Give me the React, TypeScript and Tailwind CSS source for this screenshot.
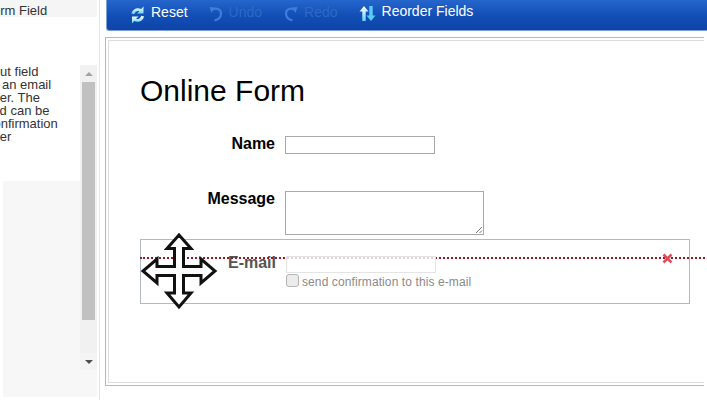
import { useId } from "react";

// Form builder, mid-drag: the e-mail field is being moved, red line marks the drop spot.
const SIDE_LINES = [
  { text: "Input field", cls: "-ml-[18px]" },
  { text: "is an email", cls: "-ml-[11px]" },
  { text: "user. The", cls: "-ml-[14px]" },
  { text: "field can be", cls: "-ml-[17px]" },
  { text: "confirmation", cls: "-ml-[13px]" },
  { text: "user", cls: "-ml-[14px]" },
];

function ResetIcon() {
  const id = useId();
  return (
    <svg width="18" height="18" viewBox="0 0 18 18" className="shrink-0 mt-[5px]">
      <defs>
        <linearGradient id={id} x1="0" y1="0" x2="0" y2="1">
          <stop offset="0" stopColor="#ffffff" />
          <stop offset="1" stopColor="#5fd0f5" />
        </linearGradient>
      </defs>
      <path
        fill={`url(#${id})`}
        d="M14.5 0.5V7.5H8L10.4 5.2C8.6 4.4 6.2 5.4 5.2 8.3L2.4 7.6C3.6 3 7.8 1 12.2 2.9Z"
      />
      <path
        fill={`url(#${id})`}
        d="M3 17.5V10.5H9.5L7.1 12.8C8.9 13.6 11.3 12.6 12.3 9.7L15.1 10.4C13.9 15 9.7 17 5.3 15.1Z"
      />
    </svg>
  );
}

function UndoIcon({ flip }: { flip?: boolean }) {
  return (
    <svg
      width="14"
      height="16"
      viewBox="0 0 14 16"
      className={flip ? "block shrink-0 -scale-x-100" : "block shrink-0"}
    >
      <path
        d="M3.5 3.5C7 1.5 12 3 12 7.5C12 11 9.5 13.5 5.5 14.5"
        fill="none"
        stroke="#3a80da"
        strokeWidth="2.2"
      />
      <path d="M0.5 1L6 1.5L2.5 7Z" fill="#3a80da" />
    </svg>
  );
}

function ReorderIcon() {
  const id = useId();
  return (
    <svg width="17" height="15" viewBox="0 0 17 15" className="block shrink-0 mt-[3px]">
      <defs>
        <linearGradient id={id} x1="0" y1="0" x2="0" y2="1">
          <stop offset="0" stopColor="#ffffff" />
          <stop offset="1" stopColor="#62d2f6" />
        </linearGradient>
      </defs>
      <path d="M5 0L9.5 5.5H6.7V15H3.3V5.5H0.5Z" fill={`url(#${id})`} />
      <path d="M12 15L16.5 9.5H13.7V0H10.3V9.5H7.5Z" fill="#58ccf4" />
    </svg>
  );
}

function MoveCursor() {
  return (
    <svg width="78" height="78" viewBox="0 0 78 78" className="absolute left-[140px] top-[232px] z-20">
      <path
        d="M39 3L51 16.5H43.5V34.5H61V27L75 39L61 51V43.5H43.5V61H51L39 75L27 61H34.5V43.5H17V51L3 39L17 27V34.5H34.5V16.5H27Z"
        fill="#ffffff"
        stroke="#111111"
        strokeWidth="3"
        strokeLinejoin="miter"
      />
    </svg>
  );
}

function Sidebar() {
  return (
    <aside className="w-[100px] shrink-0 h-[400px] flex flex-col border-r border-[#e6e6e6] overflow-hidden bg-white text-[13px] leading-[13px] text-[#333]">
      <div className="h-[17px] mr-[2px] bg-[#f5f5f5] pt-[4px] whitespace-nowrap">
        <span className="block -ml-[15px]">Form Field</span>
      </div>
      <div className="mt-[48px] flex h-[305px] pr-[2px]">
        <div className="flex-1 min-w-0 flex flex-col overflow-hidden">
          <div className="h-[116px] whitespace-nowrap">
            {SIDE_LINES.map((line) => (
              <div key={line.text} className={line.cls}>
                {line.text}
              </div>
            ))}
          </div>
          <div className="flex-1 ml-[3px] bg-[#f7f7f7]" />
        </div>
        <div className="w-[17px] shrink-0 flex flex-col bg-[#f1f1f1]">
          <div className="h-[17px] flex items-center justify-center">
            <div className="w-0 h-0 border-x-[4px] border-x-transparent border-b-[4px] border-b-[#a3a3a3]" />
          </div>
          <div className="h-[238px] mx-[2px] bg-[#c1c1c1]" />
          <div className="flex-1" />
          <div className="h-[17px] flex items-center justify-center bg-[#f4f4f4]">
            <div className="w-0 h-0 border-x-[4px] border-x-transparent border-t-[4px] border-t-[#505050]" />
          </div>
        </div>
      </div>
      <div className="h-[27px] ml-[3px] mr-[2px] bg-[#f7f7f7]" />
    </aside>
  );
}

function Toolbar() {
  return (
    <div className="ml-[6px] h-[31px] rounded-bl-[3px] bg-gradient-to-b from-[#2566cc] via-[#134fb6] to-[#0d44a8] border-b border-l border-[#7f9fd8] flex items-center pb-[6px] pl-[22px] text-[14px] leading-none text-white">
      <ResetIcon />
      <span className="ml-[4px]">Reset</span>
      <span className="ml-[21px] mt-[4px]"><UndoIcon /></span>
      <span className="ml-[6px] text-[#2d6ac6]">Undo</span>
      <span className="ml-[22px] mt-[4px]"><UndoIcon flip /></span>
      <span className="ml-[6px] text-[#2d6ac6]">Redo</span>
      <span className="ml-[21px]"><ReorderIcon /></span>
      <span className="ml-[6px] -mt-[2px]">Reorder Fields</span>
    </div>
  );
}

function FormPanel() {
  return (
    <div className="mt-[6px] ml-[5px] mr-[3px] h-[349px] border border-r-0 border-[#b9b9b9] pt-[2px] pl-[2px] pb-[2px] bg-white">
      <div className="h-full border border-r-0 border-[#dddddd] pl-[31px] pr-[14px]">
        <h1 className="pt-[32px] text-[30px] leading-[36px] font-normal text-black">Online Form</h1>
        <div className="mt-[27px] flex">
          <label className="w-[135px] -mt-[1px] text-right text-[16px] leading-[18px] font-bold text-black">Name</label>
          <input className="ml-[10px] w-[150px] h-[18px] border border-[#a9a9a9] bg-white" />
        </div>
        <div className="mt-[37px] flex">
          <label className="w-[135px] -mt-[1px] text-right text-[16px] leading-[18px] font-bold text-black">Message</label>
          <div className="relative ml-[10px] w-[199px] h-[44px] border border-[#a9a9a9] bg-white">
            <svg width="8" height="8" viewBox="0 0 8 8" className="absolute right-0 bottom-0">
              <path d="M1 7L7 1M4.5 7L7 4.5" stroke="#777" strokeWidth="1" />
            </svg>
          </div>
        </div>
        <div className="mt-[4px] h-[65px] border border-[#b1bac4] flex">
          <label className="w-[135px] pt-[14px] text-right text-[16px] leading-[18px] font-bold text-[#555]">E-mail</label>
          <div className="ml-[10px] pt-[16px]">
            <div className="relative z-10 w-[150px] h-[17px] border border-[#e4e4e4] bg-white/80" />
            <div className="mt-[1px] flex items-start gap-[3px]">
              <div className="w-[13px] h-[13px] rounded-[3px] border border-[#b5b5b5] bg-[#ececec]" />
              <span className="mt-[1px] text-[12px] leading-[14px] tracking-[0.1px] text-[#8a8a8a]">send confirmation to this e-mail</span>
            </div>
          </div>
        </div>
      </div>
    </div>
  );
}

export default function App() {
  return (
    <div className="relative w-[707px] h-[400px] overflow-hidden bg-white flex font-['Liberation_Sans',Arial,sans-serif]">
      <Sidebar />
      <main className="flex-1 min-w-0 flex flex-col">
        <Toolbar />
        <FormPanel />
      </main>
      {/* drop marker and drag cursor sit over the form */}
      <div className="absolute left-[140px] right-[2px] top-[257px] border-t-2 border-dotted border-[#a3121f]" />
      <svg width="11" height="11" viewBox="0 0 11 11" className="absolute left-[662px] top-[253px]">
        <path d="M1.5 1.5L9.5 9.5M9.5 1.5L1.5 9.5" stroke="#d9505c" strokeWidth="2.6" />
      </svg>
      <MoveCursor />
    </div>
  );
}
